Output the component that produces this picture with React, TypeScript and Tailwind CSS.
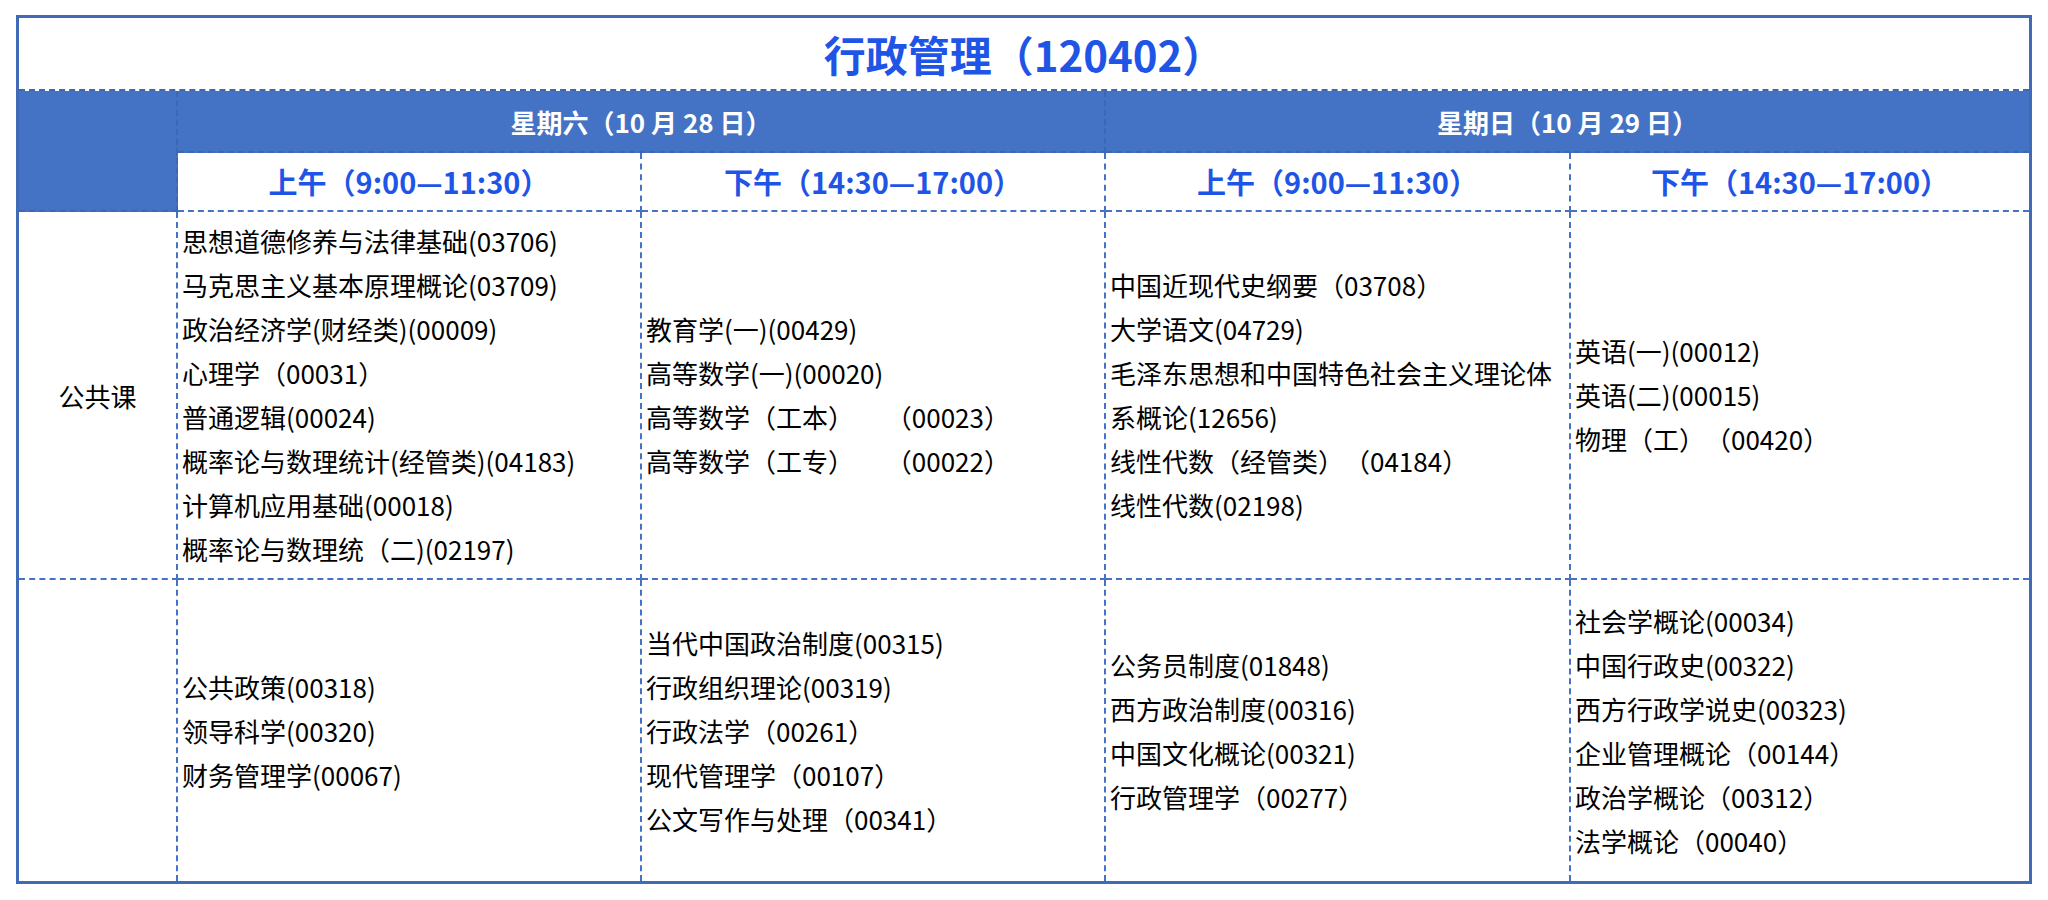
const font = "font-['Noto_Sans_CJK_SC','Noto_Sans',sans-serif] [text-spacing-trim:space-all]";

type Slot = { lines: string[] };

const publicRow: Slot[] = [
  {
    lines: [
      "思想道德修养与法律基础(03706)",
      "马克思主义基本原理概论(03709)",
      "政治经济学(财经类)(00009)",
      "心理学（00031）",
      "普通逻辑(00024)",
      "概率论与数理统计(经管类)(04183)",
      "计算机应用基础(00018)",
      "概率论与数理统（二)(02197)",
    ],
  },
  {
    lines: [
      "教育学(一)(00429)",
      "高等数学(一)(00020)",
      "高等数学（工本）　 （00023）",
      "高等数学（工专）　 （00022）",
    ],
  },
  {
    lines: [
      "中国近现代史纲要（03708）",
      "大学语文(04729)",
      "毛泽东思想和中国特色社会主义理论体",
      "系概论(12656)",
      "线性代数（经管类）（04184）",
      "线性代数(02198)",
    ],
  },
  {
    lines: ["英语(一)(00012)", "英语(二)(00015)", "物理（工）（00420）"],
  },
];

const majorRow: Slot[] = [
  { lines: ["公共政策(00318)", "领导科学(00320)", "财务管理学(00067)"] },
  {
    lines: [
      "当代中国政治制度(00315)",
      "行政组织理论(00319)",
      "行政法学（00261）",
      "现代管理学（00107）",
      "公文写作与处理（00341）",
    ],
  },
  {
    lines: [
      "公务员制度(01848)",
      "西方政治制度(00316)",
      "中国文化概论(00321)",
      "行政管理学（00277）",
    ],
  },
  {
    lines: [
      "社会学概论(00034)",
      "中国行政史(00322)",
      "西方行政学说史(00323)",
      "企业管理概论（00144）",
      "政治学概论（00312）",
      "法学概论（00040）",
    ],
  },
];

const times = [
  "上午（9:00—11:30）",
  "下午（14:30—17:00）",
  "上午（9:00—11:30）",
  "下午（14:30—17:00）",
];

function Cell({ slot, right, bottom }: { slot: Slot; right: boolean; bottom: boolean }) {
  return (
    <div
      className={`flex flex-col justify-center pl-[4px] border-dashed border-[#4472c4] ${
        right ? "border-r-2" : ""
      } ${bottom ? "border-b-2" : ""}`}
    >
      {slot.lines.map((l, i) => (
        <div key={i} className="whitespace-pre text-[26px] leading-[44px] text-black">
          {l}
        </div>
      ))}
    </div>
  );
}

export default function App() {
  return (
    <div className={`min-h-screen bg-white pt-[15px] pl-[16px] ${font}`}>
      <div className="w-[2016px] h-[869px] border-[3px] border-[#4069b6] grid grid-cols-[159px_464px_464px_465px_1fr] grid-rows-[73px_62px_59px_368px_1fr]">
        {/* title */}
        <div className="col-span-5 flex items-center justify-center border-b-2 border-dashed border-[#3d66b3]">
          <h1 className="text-[42px] font-bold text-[#1f55e6] leading-none">
            行政管理（120402）
          </h1>
        </div>

        {/* blue corner */}
        <div className="row-span-2 bg-[#4472c4] border-r-2 border-b-2 border-dashed border-[#3d66b3]" />

        {/* day headers */}
        <div className="col-span-2 bg-[#4472c4] flex items-center justify-center border-r-2 border-b-2 border-dashed border-[#3d66b3]">
          <span className="text-[26px] font-bold text-white">星期六（10 月 28 日）</span>
        </div>
        <div className="col-span-2 bg-[#4472c4] flex items-center justify-center border-b-2 border-dashed border-[#3d66b3]">
          <span className="text-[26px] font-bold text-white">星期日（10 月 29 日）</span>
        </div>

        {/* time slots */}
        {times.map((t, i) => (
          <div
            key={i}
            className={`flex items-center justify-center border-b-2 border-dashed border-[#4472c4] ${
              i < 3 ? "border-r-2" : ""
            }`}
          >
            <span className="text-[29px] font-bold text-[#1f55e6]">{t}</span>
          </div>
        ))}

        {/* public courses */}
        <div className="flex items-center justify-center border-r-2 border-b-2 border-dashed border-[#4472c4]">
          <span className="text-[26px] text-black">公共课</span>
        </div>
        {publicRow.map((s, i) => (
          <Cell key={i} slot={s} right={i < 3} bottom />
        ))}

        {/* major courses */}
        <div className="border-r-2 border-dashed border-[#4472c4]" />
        {majorRow.map((s, i) => (
          <Cell key={i} slot={s} right={i < 3} bottom={false} />
        ))}
      </div>
    </div>
  );
}
